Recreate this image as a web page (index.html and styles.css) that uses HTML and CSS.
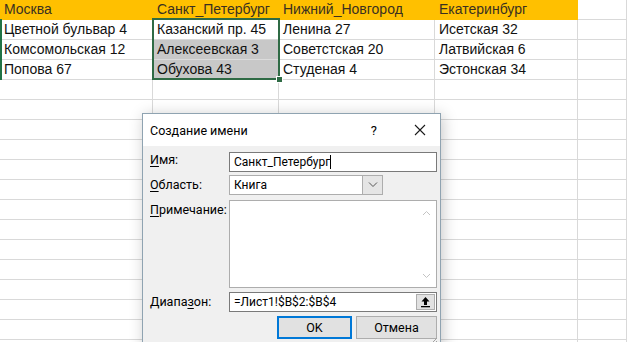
FILE: index.html
```html
<!DOCTYPE html>
<html lang="ru">
<head>
<meta charset="utf-8">
<link rel="stylesheet" href="styles.css">
</head>
<body>
<div class="page">
  <div class="sheet">
    <div class="c h">Москва</div><div class="c h">Санкт_Петербург</div><div class="c h">Нижний_Новгород</div><div class="c h">Екатеринбург</div><div class="c e"></div>
    <div class="c">Цветной бульвар 4</div><div class="c">Казанский пр. 45</div><div class="c">Ленина 27</div><div class="c">Исетская 32</div><div class="c e"></div>
    <div class="c">Комсомольская 12</div><div class="c sel">Алексеевская 3</div><div class="c">Советстская 20</div><div class="c">Латвийская 6</div><div class="c e"></div>
    <div class="c">Попова 67</div><div class="c sel">Обухова 43</div><div class="c">Студеная 4</div><div class="c">Эстонская 34</div><div class="c e"></div>
    <div class="c"></div><div class="c"></div><div class="c"></div><div class="c"></div><div class="c e"></div>
    <div class="c"></div><div class="c"></div><div class="c"></div><div class="c"></div><div class="c e"></div>
    <div class="c"></div><div class="c"></div><div class="c"></div><div class="c"></div><div class="c e"></div>
    <div class="c"></div><div class="c"></div><div class="c"></div><div class="c"></div><div class="c e"></div>
    <div class="c"></div><div class="c"></div><div class="c"></div><div class="c"></div><div class="c e"></div>
    <div class="c"></div><div class="c"></div><div class="c"></div><div class="c"></div><div class="c e"></div>
    <div class="c"></div><div class="c"></div><div class="c"></div><div class="c"></div><div class="c e"></div>
    <div class="c"></div><div class="c"></div><div class="c"></div><div class="c"></div><div class="c e"></div>
    <div class="c"></div><div class="c"></div><div class="c"></div><div class="c"></div><div class="c e"></div>
    <div class="c"></div><div class="c"></div><div class="c"></div><div class="c"></div><div class="c e"></div>
    <div class="c"></div><div class="c"></div><div class="c"></div><div class="c"></div><div class="c e"></div>
    <div class="c"></div><div class="c"></div><div class="c"></div><div class="c"></div><div class="c e"></div>
    <div class="c"></div><div class="c"></div><div class="c"></div><div class="c"></div><div class="c e"></div>
    <div class="c"></div><div class="c"></div><div class="c"></div><div class="c"></div><div class="c e"></div>
  </div>
  <div class="rowmark"></div>
  <div class="selection"><span class="handle"></span></div>

  <div class="dialog">
    <div class="titlebar">
      <span class="title">Создание имени</span>
      <span class="help">?</span>
      <svg class="close" width="12" height="12" viewBox="0 0 12 12"><path d="M1 1L11 11M11 1L1 11" stroke="#1a1a1a" stroke-width="1.1" fill="none"/></svg>
    </div>
    <div class="body">
      <div class="row r-name">
        <span class="label"><u>И</u>мя:</span>
        <div class="field input">Санкт_Петербург<span class="caret"></span></div>
      </div>
      <div class="row r-scope">
        <span class="label"><u>О</u>бласть:</span>
        <div class="field select"><span class="sval">Книга</span><span class="dd"><svg width="10" height="6" viewBox="0 0 10 6"><path d="M1 0.5L5 4.5L9 0.5" stroke="#555" stroke-width="1" fill="none"/></svg></span></div>
      </div>
      <div class="row r-note">
        <span class="label"><u>П</u>римечание:</span>
        <div class="field textarea">
          <svg class="sb-up" width="9" height="6" viewBox="0 0 9 6"><path d="M1 5L4.5 1.5L8 5" stroke="#c3c3c3" stroke-width="1" fill="none"/></svg>
          <svg class="sb-down" width="9" height="6" viewBox="0 0 9 6"><path d="M1 1L4.5 4.5L8 1" stroke="#c3c3c3" stroke-width="1" fill="none"/></svg>
        </div>
      </div>
      <div class="row r-range">
        <span class="label">Диапа<u>з</u>он:</span>
        <div class="field range"><span class="rval">=Лист1!$B$2:$B$4</span><span class="rbtn"><svg width="11" height="12" viewBox="0 0 11 12"><path d="M5.5 1L1.5 5.5H4V9H7V5.5H9.5Z" fill="#000"/><rect x="1" y="10" width="9" height="1.3" fill="#000"/></svg></span></div>
      </div>
      <div class="buttons">
        <span class="btn ok">OK</span>
        <span class="btn cancel">Отмена</span>
      </div>
    </div>
    <svg class="grip" width="8" height="8" viewBox="0 0 8 8"><path d="M7 2L2 7M7 5L5 7" stroke="#a0a0a0" stroke-width="1"/></svg>
  </div>
</div>
</body>
</html>
```
FILE: styles.css
```css
html, body {
  margin: 0;
  padding: 0;
  background: #fff;
}
.page {
  position: relative;
  width: 627px;
  height: 342px;
  overflow: hidden;
}
.sheet {
  display: grid;
  grid-template-columns: 153px 126px 156px 143px 1fr;
  grid-auto-rows: 20px;
  font-family: "Liberation Sans", Arial, sans-serif;
  font-size: 14px;
  color: #111;
}
.c {
  box-sizing: border-box;
  border-right: 1px solid #d9d9d9;
  border-bottom: 1px solid #d9d9d9;
  padding-left: 4px;
  line-height: 19px;
  white-space: nowrap;
  overflow: hidden;
}
.c.h {
  background: #ffc000;
  border-color: #ffc000;
  color: #3a3020;
}
.c.sel {
  background: #c8c8c8;
  border-bottom-color: #dcdcdc;
}
.rowmark {
  position: absolute;
  left: 0;
  top: 19px;
  width: 2px;
  height: 61px;
  background: #217346;
}
.selection {
  position: absolute;
  left: 152px;
  top: 18px;
  width: 124px;
  height: 58px;
  border: 2px solid #2f6b45;
}
.handle {
  position: absolute;
  right: -5px;
  bottom: -5px;
  width: 5px;
  height: 5px;
  background: #2f6b45;
  border: 1px solid #fff;
}
.dialog {
  position: absolute;
  left: 142px;
  top: 113px;
  width: 297px;
  height: 240px;
  border: 1px solid #8fa3b1;
  background: #f0f0f0;
  box-shadow: 2px 2px 14px rgba(0,0,0,0.22);
  font-family: Roboto, "Noto Sans", sans-serif;
  font-size: 12.5px;
  color: #000;
}
.titlebar {
  height: 32px;
  background: #fff;
  display: flex;
  align-items: center;
  padding-left: 7px;
  position: relative;
}
.title {
  font-size: 12.5px;
  flex: 1;
  padding-top: 1px;
}
.help {
  font-size: 13px;
  margin-right: 37px;
}
.close {
  margin-right: 14px;
}
.body {
  padding: 6px 3px 0 7px;
}
.row {
  display: flex;
  align-items: flex-start;
}
.label {
  width: 79px;
  flex: none;
  line-height: 16px;
}
.label u {
  text-decoration-thickness: 1px;
  text-underline-offset: 2px;
}
.field {
  box-sizing: border-box;
  background: #fff;
  border: 1px solid #7a7a7a;
  position: relative;
}
.input {
  width: 208px;
  height: 20px;
  padding-left: 4px;
  line-height: 18px;
  font-size: 12px;
}
.caret {
  display: inline-block;
  width: 1px;
  height: 14px;
  background: #000;
  vertical-align: -3px;
}
.r-scope { margin-top: 3px; }
.r-scope .label { margin-top: 2px; }
.select {
  width: 154px;
  height: 20px;
  display: flex;
  border-color: #adadad;
}
.sval {
  flex: 1;
  padding-left: 4px;
  line-height: 19px;
  font-size: 12px;
}
.dd {
  width: 19px;
  border-left: 1px solid #adadad;
  background: #e5e5e5;
  display: flex;
  align-items: center;
  justify-content: center;
}
.r-note { margin-top: 5px; }
.r-note .label { margin-top: 2px; }
.textarea {
  width: 208px;
  height: 88px;
  border-color: #adadad;
}
.sb-up {
  position: absolute;
  right: 5px;
  top: 9px;
}
.sb-down {
  position: absolute;
  right: 5px;
  bottom: 8px;
}
.r-range { margin-top: 4px; }
.r-range .label { margin-top: 2px; }
.range {
  width: 208px;
  height: 20px;
  display: flex;
}
.rval {
  flex: 1;
  padding-left: 4px;
  line-height: 18px;
  font-size: 12px;
}
.rbtn {
  width: 19px;
  height: 16px;
  margin: 1px 1px 1px 0;
  border: 1px solid #adadad;
  box-sizing: border-box;
  background: #e1e1e1;
  display: flex;
  align-items: center;
  justify-content: center;
}
.buttons {
  display: flex;
  justify-content: flex-end;
  gap: 4px;
  margin-top: 4px;
}
.btn {
  box-sizing: border-box;
  height: 23px;
  line-height: 21px;
  text-align: center;
  background: #e1e1e1;
  border: 1px solid #adadad;
  font-size: 12.5px;
}
.btn.ok {
  width: 75px;
  border: 1px solid #0078d7;
  box-shadow: inset 0 0 0 1px #0078d7;
}
.btn.cancel {
  width: 81px;
}
.grip {
  position: absolute;
  right: 2px;
  top: 222px;
}
```
